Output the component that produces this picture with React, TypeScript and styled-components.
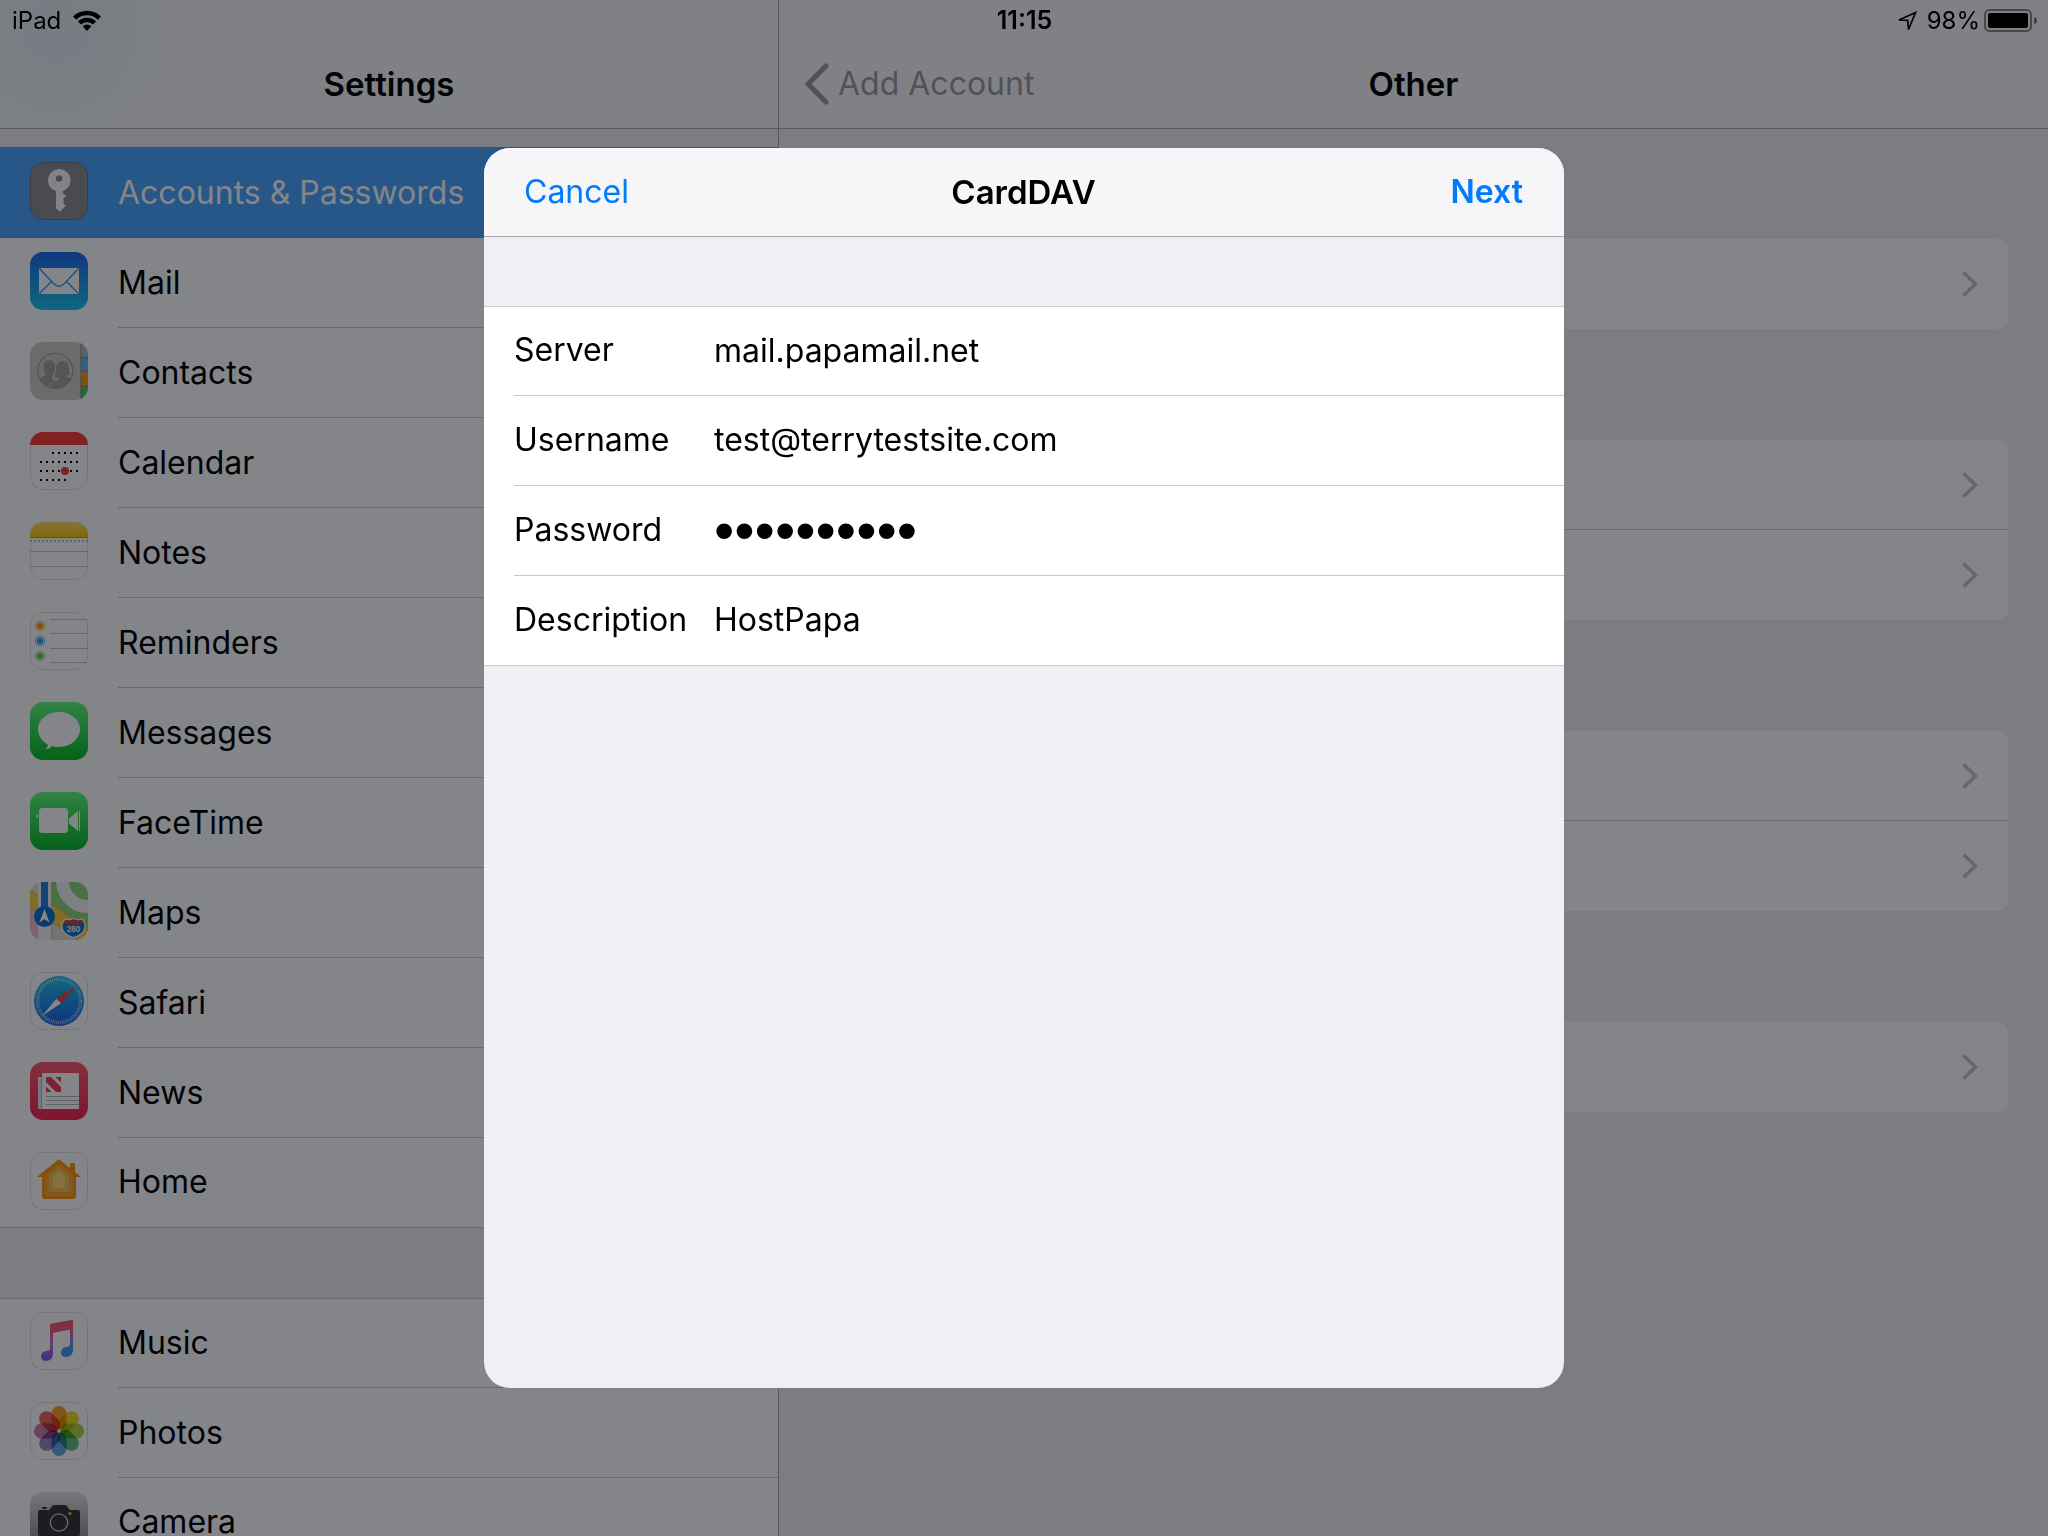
import React from "react";
import styled, { createGlobalStyle, css } from "styled-components";

const color = {
  text: "#000000",
  tint: "#007aff",
  bar: "#f8f8f9",
  group: "#efeff4",
  line: "#c8c7cc",
  barLine: "#a7a7ac",
  selected: "#4aa5ff",
};

const font = css`
  font-family: Inter, Roboto, "Liberation Sans", sans-serif;
  font-size: 32px;
  line-height: 40px;
`;

const GlobalStyle = createGlobalStyle`
  *, *::before, *::after { box-sizing: border-box; }
  body { margin: 0; color: ${color.text}; ${font} }
  button, input { font: inherit; color: inherit; border: 0; padding: 0; margin: 0; background: none; }
  ul { list-style: none; margin: 0; padding: 0; }
  h1, h2 { font-size: 33px; font-weight: 600; margin: 0; }
  svg { display: block; flex: none; }
`;

const Screen = styled.div`
  display: flex;
  height: 100vh;
  overflow: hidden;
  background: ${color.group};
`;

const StatusBar = styled.div`
  position: absolute;
  inset: 0 0 auto 0;
  display: grid;
  grid-template-columns: 1fr auto 1fr;
  align-items: center;
  height: 41px;
  padding: 0 11px 0 12px;
  font-size: 24px;
  line-height: 29px;
  z-index: 3;
`;

const StatusGroup = styled.div<{ $end?: boolean; $gap: number }>`
  display: flex;
  align-items: center;
  gap: ${(p) => p.$gap}px;
  justify-content: ${(p) => (p.$end ? "flex-end" : "flex-start")};
`;

const Time = styled.time`
  font-size: 25px;
  font-weight: 600;
`;

const Sidebar = styled.aside`
  flex: 0 0 779px;
  display: flex;
  flex-direction: column;
  border-right: 1px solid ${color.barLine};
  overflow: hidden;
`;

const Main = styled.main`
  flex: 1;
  min-width: 0;
`;

const NavBar = styled.header<{ $glow?: boolean }>`
  flex: none;
  display: grid;
  grid-template-columns: 1fr auto 1fr;
  align-items: center;
  height: 129px;
  padding: 40px 25px 0;
  border-bottom: 1px solid ${color.barLine};
  background: ${(p) =>
    p.$glow
      ? `radial-gradient(circle at 56px 30px, #e5eff6 0, #e9f1f5 50px, ${color.bar} 130px)`
      : color.bar};
  h1 { grid-column: 2; }
`;

const BackButton = styled.button`
  display: flex;
  align-items: center;
  gap: 8px;
  justify-self: start;
  color: #9c9ca1;
`;

const Group = styled.ul<{ $first?: boolean }>`
  margin-top: ${(p) => (p.$first ? 19 : 70)}px;
  background: #fff;
  box-shadow: ${(p) => (p.$first ? `0 -1px ${color.selected}` : `inset 0 1px ${color.line}`)};
`;

const Row = styled.button<{ $selected?: boolean }>`
  display: flex;
  align-items: center;
  gap: 30px;
  width: 100%;
  height: 90px;
  padding-left: 30px;
  text-align: left;
  ${(p) => p.$selected && css`background: ${color.selected}; color: #fff;`}
`;

const RowLabel = styled.span<{ $line: boolean }>`
  flex: 1;
  align-self: stretch;
  display: flex;
  align-items: center;
  border-bottom: 1px solid ${(p) => (p.$line ? color.line : "transparent")};
`;

const ListItem = styled.li`
  &:last-child { border-bottom: 1px solid ${color.line}; }
  &:last-child > button { height: 89px; }
`;

const IconTile = styled.svg`
  width: 58px;
  height: 58px;
  margin-bottom: 4px;
  border-radius: 13px;
  isolation: isolate;
`;

const Cards = styled.div`
  display: flex;
  flex-direction: column;
  gap: 111px;
  padding: 110px 40px;
`;

const Card = styled.ul`
  border-radius: 10px;
  background: #fff;
`;

const CardItem = styled.li`
  height: 90px;
  &:not(:last-child) { border-bottom: 1px solid ${color.line}; }
`;

const CardRow = styled.button`
  display: flex;
  align-items: center;
  justify-content: flex-end;
  width: 100%;
  height: 100%;
  padding-right: 30px;
`;

const Backdrop = styled.div`
  position: fixed;
  inset: 0;
  display: flex;
  align-items: center;
  justify-content: center;
  background: rgba(4, 7, 12, 0.49);
  z-index: 2;
`;

const Sheet = styled.form`
  width: min(1080px, 100%);
  height: min(1240px, 100%);
  border-radius: 26px;
  overflow: hidden;
  background: ${color.group};
`;

const SheetBar = styled.header`
  display: grid;
  grid-template-columns: 1fr auto 1fr;
  align-items: center;
  height: 89px;
  padding: 0 41px 0 40px;
  border-bottom: 1px solid ${color.barLine};
  background: #f6f6f9;
`;

const SheetButton = styled.button<{ $strong?: boolean }>`
  color: ${color.tint};
  font-weight: ${(p) => (p.$strong ? 600 : 400)};
  justify-self: ${(p) => (p.$strong ? "end" : "start")};
`;

const Fields = styled.div`
  margin-top: 69px;
  padding-left: 30px;
  background: #fff;
  border-top: 1px solid ${color.line};
  border-bottom: 1px solid ${color.line};
`;

const Field = styled.div`
  display: grid;
  grid-template-columns: 200px 1fr;
  align-items: center;
  height: 90px;
  padding-bottom: 2px;
  & + & { border-top: 1px solid ${color.line}; }
  &:first-child { height: 88px; }
`;

const TextInput = styled.input`
  width: 100%;
  height: 60px;
  outline: none;
  &[type="password"] {
    font-family: "Liberation Sans", Arial, sans-serif;
    font-size: 58px;
  }
`;

const Edge = () => (
  <rect x="0.5" y="0.5" width="57" height="57" rx="12.5" fill="none" stroke="#e0e0e2" />
);

const Grad = ({ id, from, to }: { id: string; from: string; to: string }) => (
  <linearGradient id={id} x1="0" y1="0" x2="0" y2="1">
    <stop offset="0" stopColor={from} />
    <stop offset="1" stopColor={to} />
  </linearGradient>
);

const Tile = ({ children }: { children: React.ReactNode }) => (
  <IconTile viewBox="0 0 58 58" aria-hidden="true">{children}</IconTile>
);

const KeyIcon = () => (
  <Tile>
    <rect width="58" height="58" rx="13" fill="#8e8e93" />
    <rect x="0.5" y="0.5" width="57" height="57" rx="12.5" fill="none" stroke="#6f6f78" />
    <path
      fill="#fbfbfc"
      fillRule="evenodd"
      d="M29.3 7a11.4 11.4 0 0 1 3.2 22.3v1.2L36 34l-3 3.2 1 1.8-1 2 3 2.6-6 6.2-4-3.6V29.3A11.4 11.4 0 0 1 29.3 7Zm-.2 6.200a3.200 3.200 0 1 0 0 6.400a3.200 3.200 0 0 0 0-6.400Z"
    />
  </Tile>
);

const MailIcon = () => (
  <Tile>
    <defs><Grad id="mail" from="#1f68f0" to="#1bc4ee" /></defs>
    <rect width="58" height="58" fill="url(#mail)" />
    <rect x="9" y="16" width="40" height="26" rx="1" fill="#fff" />
    <path d="M9.500 16.500 23.500 31.500Q29 37 34.500 31.500L48.500 16.500M9.500 41.500 21.500 29.500M48.500 41.500 36.500 29.500" fill="none" stroke="#2a97ee" strokeWidth="1.300" />
  </Tile>
);

const ContactsIcon = () => (
  <Tile>
    <rect width="58" height="58" fill="#cfcdc6" />
    <path d="M51 0h7v15h-7z" fill="#b9b9b9" />
    <path d="M51 15.500h7V29h-7z" fill="#5bb8ee" />
    <path d="M51 29.500h7V44h-7z" fill="#fb9a0e" />
    <path d="M51 44.500h7V58h-7z" fill="#40cf5c" />
    <path d="M51 0v58" stroke="#77756f" strokeWidth="0.800" />
    <path d="M51 15.500h7M51 29h7M51 44.500h7" stroke="#666" strokeWidth="0.700" />
    <circle cx="25.300" cy="29" r="17.500" fill="none" stroke="#9e9c99" strokeWidth="1.200" />
    <path fill="#a4a19c" d="M19.500 18c-4.500 0-6.500 3-6 7 .2 3 1.200 5 2.500 7-1 3-6 3-7 4.500 2 4 6 7.500 10 8.500 0-4 4-4 6-6-3-1.500-3-3-2.500-5 1.500-2 2.500-5 2.500-9 0-4-2-7-5.500-7Z" />
    <path fill="#a4a19c" d="M32.500 19c-5 0-6.500 3.500-6.500 8 0 3-1 5.500-1 7.500 1 1.500 3 1.500 4 2-1 4-8 3-9 8.800 8 2.700 17-.3 21-8.800-2-1.500-5-1-5.500-3 2 0 3.500-.5 4.500-1.500-1.500-2-1-4-1.200-6.500-.3-4-1.800-6.500-6.300-6.500Z" />
  </Tile>
);

const calendarDots: Array<[number, number]> = [];
[[23, 47, 21], [11, 47, 30], [11, 47, 39], [11, 35, 48]].forEach(([a, b, y]) => {
  for (let x = a; x <= b; x += 6) calendarDots.push([x, y]);
});

const CalendarIcon = () => (
  <Tile>
    <rect width="58" height="58" fill="#fff" />
    <Edge />
    <rect width="58" height="13" fill="#fb3c35" />
    {calendarDots.map(([x, y]) => <rect key={`${x}-${y}`} x={x - 1} y={y - 1} width="2" height="2" fill="#000" />)}
    <circle cx="35" cy="39" r="4" fill="#fb3c35" />
  </Tile>
);

const NotesIcon = () => (
  <Tile>
    <defs><Grad id="notes" from="#fbdf66" to="#f8c506" /></defs>
    <rect width="58" height="58" fill="#fff" />
    <Edge />
    <rect width="58" height="15" fill="url(#notes)" />
    <path d="M0 15.500h58" stroke="#a69a7d" />
    <path d="M0 19h58" stroke="#c4c4c6" strokeWidth="2" strokeDasharray="2 2" />
    <path d="M0 29.500h58M0 44.500h58" stroke="#c4c4c6" />
  </Tile>
);

const RemindersIcon = () => (
  <Tile>
    <rect width="58" height="58" fill="#fff" />
    <Edge />
    <path d="M20 7.500h37M20 21.500h38M20 36.500h38M20 50.500h37" stroke="#c4c4c6" />
    {[["#fb950f", 14], ["#1ca4ee", 29], ["#62cf4b", 44]].map(([c, y]) => (
      <g key={c}>
        <circle cx="10" cy={y} r="4.500" fill="none" stroke={c as string} />
        <circle cx="10" cy={y} r="3" fill={c as string} />
      </g>
    ))}
  </Tile>
);

const MessagesIcon = () => (
  <Tile>
    <defs><Grad id="messages" from="#60fb7c" to="#06bb25" /></defs>
    <rect width="58" height="58" fill="url(#messages)" />
    <path fill="#fff" d="M29 10c11.600 0 21 7.600 21 17.300S40.600 45 29 45c-2.600 0-5-.3-7.200-1-1.800 2-4.300 3.500-6.500 3.500 1.300-1.300 2.700-3 2.500-5C12 39.500 8 33.800 8 27.300 8 17.600 17.400 10 29 10Z" />
  </Tile>
);

const FaceTimeIcon = () => (
  <Tile>
    <defs><Grad id="facetime" from="#60fb7c" to="#06bb25" /></defs>
    <rect width="58" height="58" fill="url(#facetime)" />
    <rect x="9" y="16" width="29" height="25" rx="3.500" fill="#fff" />
    <path fill="#fff" d="M39 26.500 48 19v20l-9-7.500zM49 19h1v20h-1zM8 22v4q-2-.5-2-2t2-2Z" />
  </Tile>
);

const MapsIcon = () => (
  <Tile>
    <rect width="58" height="58" fill="#dcdbd5" />
    <path d="M21 0h37v50L21 26z" fill="#8fd573" />
    <circle cx="58" cy="-1" r="25.500" fill="none" stroke="#f3f3f3" strokeWidth="13" />
    <path d="M0 26l8 5v27H0z" fill="#f0bfc8" />
    <path d="M0 8 58 47v11h-10L0 25z" fill="#fbd13a" stroke="#e9a93c" strokeWidth="0.800" />
    <path d="M8 0h13v58H8z" fill="#f7f7f7" />
    <path d="M11 0h7v26h-7z" fill="#2380dc" />
    <path d="M21.500 0v58" stroke="#b8b8b4" strokeWidth="0.800" />
    <circle cx="14.500" cy="34.500" r="10.500" fill="#0d74cf" />
    <path d="M14.500 27 19.500 40.500l-5-3.500-5 3.500z" fill="#fff" />
    <path d="M35 37q4 2 8.500-.5Q48 39 52.500 37l2.500 5c1 7-4 11.500-11.500 13.500C36 53.500 31 49 32 42z" fill="#1575cc" stroke="#fff" strokeWidth="1.200" />
    <path d="M35.300 38q4 1.500 8.200-.5 4.500 2 8.500.5l1.500 4.500h-20z" fill="#d93a3a" />
    <text x="43.500" y="49.500" fontSize="7" fontWeight="700" textAnchor="middle" fill="#fff">280</text>
  </Tile>
);

const SafariIcon = () => (
  <Tile>
    <defs><Grad id="safari" from="#1dc4ee" to="#1c5fe6" /></defs>
    <rect width="58" height="58" fill="#fff" />
    <Edge />
    <circle cx="29" cy="29" r="25" fill="url(#safari)" />
    <circle cx="29" cy="29" r="21.500" fill="none" stroke="#fff" strokeOpacity="0.750" strokeWidth="3.600" strokeDasharray="0.700 1.177" />
    <path d="M46.500 13.500 31.200 31.300 26.300 26.700z" fill="#fb3c35" />
    <path d="M12 44 31.200 31.300 26.300 26.700z" fill="#fff" />
  </Tile>
);

const NewsIcon = () => (
  <Tile>
    <defs><Grad id="news" from="#fb5a6c" to="#f5234f" /></defs>
    <rect width="58" height="58" fill="url(#news)" />
    <path d="M8 15h4v32H9q-1 0-1-1z" fill="#e8e8ec" />
    <path d="M12 11h37v35q0 1-1 1H12z" fill="#fff" />
    <path d="M11.500 15v32" stroke="#a9a9ad" strokeWidth="0.800" />
    <path d="M16 15h5l10 10v5h-5L16 20zM25.500 15H31v5.500zM16 24.500V30h5.500z" fill="#f53a5a" />
    <path d="M16 34.500h33M16 38.500h33M16 42.500h33" stroke="#b4b4b8" />
  </Tile>
);

const HomeIcon = () => (
  <Tile>
    <rect width="58" height="58" fill="#fff" />
    <Edge />
    <path d="M29 7 40 16v-4q0-1 1-1h3q1 0 1 1v8l6 5h-5v19q0 3-3 3H15q-3 0-3-3V25H7z" fill="#fb960c" />
    <path d="M29 11.500 43 22.500V44H15V22.500z" fill="#f9a82e" />
    <path d="M29 15 39 23v17H19V23z" fill="#f9bf4b" />
    <path d="M29 18.500 35 24v12H23V24z" fill="#f8dc72" />
  </Tile>
);

const MusicIcon = () => (
  <Tile>
    <defs>
      <linearGradient id="noteL" x1="0" y1="0" x2="0" y2="1">
        <stop offset="0.100" stopColor="#fb5468" /><stop offset="0.550" stopColor="#c06fd8" /><stop offset="1" stopColor="#7a5cf5" />
      </linearGradient>
      <linearGradient id="noteR" x1="0" y1="0" x2="0" y2="1">
        <stop offset="0.100" stopColor="#fb5468" /><stop offset="0.450" stopColor="#c06fc8" /><stop offset="0.800" stopColor="#3d9cf0" />
      </linearGradient>
    </defs>
    <rect width="58" height="58" fill="#fff" />
    <Edge />
    <path d="M20 13q0-1 1-1.200L30 10v9.500L23 21v21c0 4-3 7-7 7-3 0-5-2-5-4.500 0-3 2-5 5-5.500 3-.3 4-1 4-3z" fill="url(#noteL)" />
    <path d="M30 10 42 8q1 0 1 1v29c0 4-3 7-7 7-3 0-5-2-5-4.500 0-3 2-5 5-5.500 3-.3 4-1 4-3V17.800L30 19.500z" fill="url(#noteR)" />
  </Tile>
);

const petals = ["#f9a02a", "#ecdf1c", "#b3d243", "#62bf8c", "#64a7dc", "#9a86c4", "#cb7ca8", "#ee645c"];

const Petal = styled.rect`
  mix-blend-mode: multiply;
`;

const PhotosIcon = () => (
  <Tile>
    <rect width="58" height="58" fill="#fff" />
    <Edge />
    {petals.map((c, i) => (
      <Petal key={c} x="21.500" y="4" width="15" height="23.500" rx="7.500" fill={c} transform={`rotate(${i * 45} 29 29)`} />
    ))}
  </Tile>
);

const CameraIcon = () => (
  <Tile>
    <defs><Grad id="camera" from="#e6e6e8" to="#7a7a7e" /></defs>
    <rect width="58" height="58" fill="url(#camera)" />
    <path d="M10 18h8q2 0 3-2.500T24 13h11q2 0 3 2.500t3 2.500h7q2 0 2 2v22q0 2-2 2H10q-2 0-2-2V20q0-2 2-2Z" fill="#33343a" />
    <rect x="12" y="15" width="5" height="2" rx="1" fill="#33343a" />
    <circle cx="29" cy="30.500" r="8.700" fill="none" stroke="#d2d2d6" strokeWidth="1.200" />
    <circle cx="40" cy="21.500" r="1.500" fill="#fbbf10" />
  </Tile>
);

const Wifi = () => (
  <svg width="28" height="22" viewBox="0 0 28 22" aria-label="Wi-Fi">
    <path d="M0 6.500a19.800 19.800 0 0 1 28 0L24.800 9.700a15.300 15.300 0 0 0-21.600 0z" />
    <path d="M4.900 11.400a12.900 12.900 0 0 1 18.200 0L19.900 14.600a8.400 8.400 0 0 0-11.800 0z" />
    <path d="M9.700 16.200a6.100 6.100 0 0 1 8.600 0L14 21z" />
  </svg>
);

const Location = () => (
  <svg width="20" height="20" viewBox="0 0 20 20" aria-label="Location">
    <path d="M18.500 1.500 2 9l8.700.3.800 9.200z" fill="none" stroke="#000" strokeWidth="1.700" />
  </svg>
);

const Battery = () => (
  <svg width="53" height="24" viewBox="0 0 53 24" aria-label="Battery">
    <rect x="1" y="1" width="46" height="21" rx="4.500" fill="none" stroke="#000" strokeOpacity="0.450" strokeWidth="2" />
    <rect x="4" y="4" width="40" height="15" rx="2" />
    <path d="M50 8q3 1 3 3.500T50 15z" fillOpacity="0.500" />
  </svg>
);

const Disclosure = () => (
  <svg width="16" height="26" viewBox="0 0 16 26" aria-hidden="true">
    <path d="M1.500 1.500 13.500 13 1.500 24.500" fill="none" stroke="#c4c4c9" strokeWidth="3.600" />
  </svg>
);

const BackChevron = () => (
  <svg width="26" height="42" viewBox="0 0 26 42" aria-hidden="true">
    <path d="M22 3 4 21l18 18" fill="none" stroke="currentColor" strokeWidth="5" strokeLinecap="round" />
  </svg>
);

const groups = [
  [
    { name: "Accounts & Passwords", Icon: KeyIcon, selected: true },
    { name: "Mail", Icon: MailIcon },
    { name: "Contacts", Icon: ContactsIcon },
    { name: "Calendar", Icon: CalendarIcon },
    { name: "Notes", Icon: NotesIcon },
    { name: "Reminders", Icon: RemindersIcon },
    { name: "Messages", Icon: MessagesIcon },
    { name: "FaceTime", Icon: FaceTimeIcon },
    { name: "Maps", Icon: MapsIcon },
    { name: "Safari", Icon: SafariIcon },
    { name: "News", Icon: NewsIcon },
    { name: "Home", Icon: HomeIcon },
  ],
  [
    { name: "Music", Icon: MusicIcon },
    { name: "Photos", Icon: PhotosIcon },
    { name: "Camera", Icon: CameraIcon },
  ],
] as Array<Array<{ name: string; Icon: React.FC; selected?: boolean }>>;

const cards = [
  ["Add Mail Account"],
  ["Add LDAP Account", "Add CardDAV Account"],
  ["Add CalDAV Account", "Add Subscribed Calendar"],
  ["Add macOS Server Account"],
];

const fields = [
  { id: "server", label: "Server", type: "text", value: "mail.papamail.net" },
  { id: "username", label: "Username", type: "text", value: "test@terrytestsite.com" },
  { id: "password", label: "Password", type: "password", value: "0123456789" },
  { id: "description", label: "Description", type: "text", value: "HostPapa" },
];

export default function App() {
  return (
    <>
      <GlobalStyle />
      <Screen>
        <Sidebar>
          <NavBar $glow><h1>Settings</h1></NavBar>
          {groups.map((rows, g) => (
            <Group key={g} $first={g === 0}>
              {rows.map(({ name, Icon, selected }, i) => (
                <ListItem key={name}>
                  <Row type="button" $selected={selected}>
                    <Icon />
                    <RowLabel $line={!selected && i < rows.length - 1}>{name}</RowLabel>
                  </Row>
                </ListItem>
              ))}
            </Group>
          ))}
        </Sidebar>
        <Main>
          <NavBar>
            <BackButton type="button"><BackChevron />Add Account</BackButton>
            <h1>Other</h1>
          </NavBar>
          <Cards>
            {cards.map((rows) => (
              <Card key={rows[0]}>
                {rows.map((name) => (
                  <CardItem key={name}>
                    <CardRow type="button" aria-label={name}><Disclosure /></CardRow>
                  </CardItem>
                ))}
              </Card>
            ))}
          </Cards>
        </Main>
      </Screen>
      <Backdrop>
        <Sheet role="dialog" aria-modal="true" aria-labelledby="sheet-title" onSubmit={(e) => e.preventDefault()}>
          <SheetBar>
            <SheetButton type="button">Cancel</SheetButton>
            <h2 id="sheet-title">CardDAV</h2>
            <SheetButton type="submit" $strong>Next</SheetButton>
          </SheetBar>
          <Fields>
            {fields.map((f) => (
              <Field key={f.id}>
                <label htmlFor={f.id}>{f.label}</label>
                <TextInput id={f.id} type={f.type} defaultValue={f.value} autoComplete="off" spellCheck={false} />
              </Field>
            ))}
          </Fields>
        </Sheet>
      </Backdrop>
      <StatusBar>
        <StatusGroup $gap={12}><span>iPad</span><Wifi /></StatusGroup>
        <Time>11:15</Time>
        <StatusGroup $end $gap={4}><StatusGroup $gap={10}><Location /><span>98%</span></StatusGroup><Battery /></StatusGroup>
      </StatusBar>
    </>
  );
}
